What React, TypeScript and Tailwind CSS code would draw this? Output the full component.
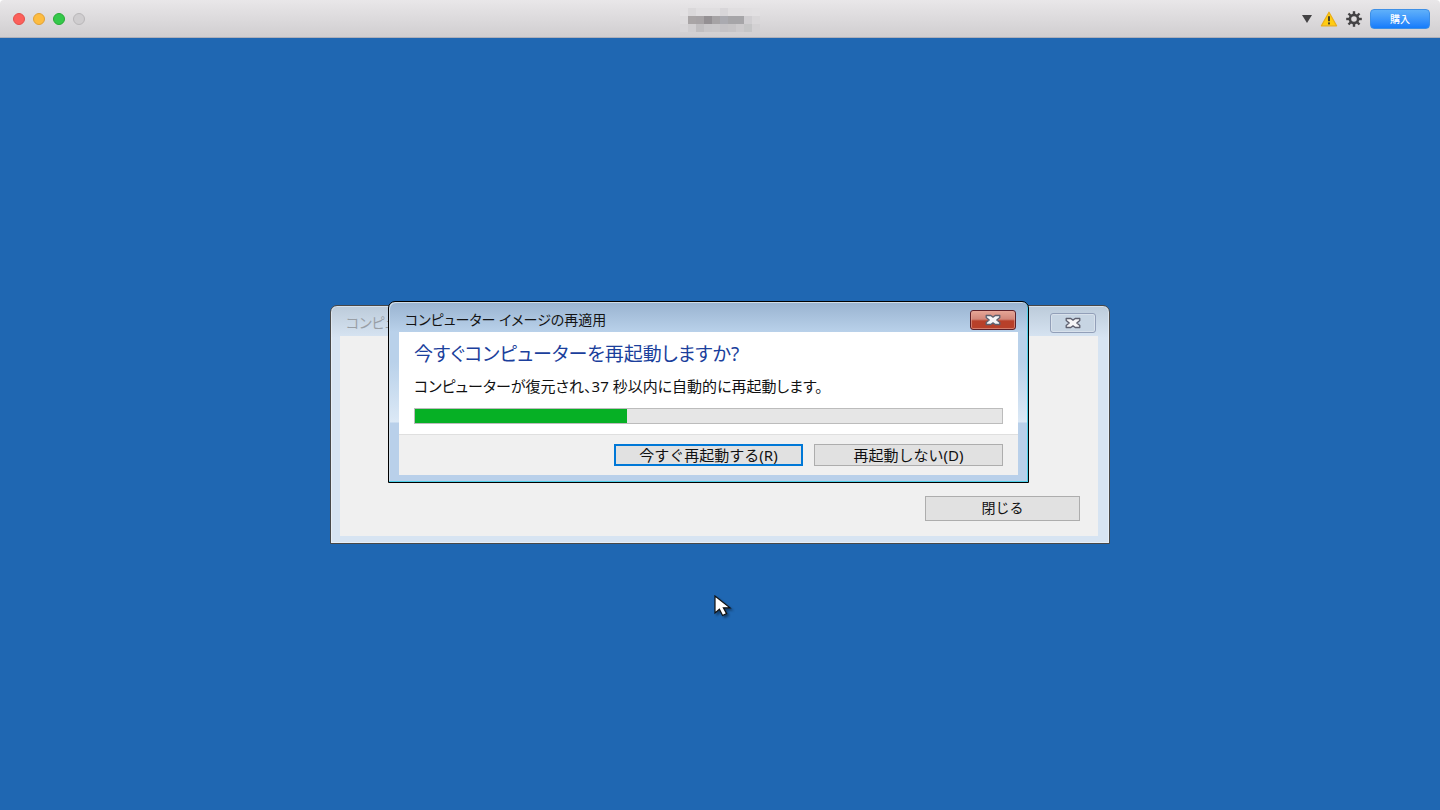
import type { ReactNode } from 'react'

const MOSAIC_ROWS = [
  ['#e3e1e3', '#dad8da', '#e0dee0', '#e0dee0', '#e0dee0', '#d8d6d9', '#e0dee0', '#e0dee0', '#e1dfe1', '#e2e0e2'],
  ['#dddbdd', '#a9a5a6', '#a7a3a5', '#949093', '#a6a3a5', '#aaaab0', '#a6a5a8', '#a6a5a8', '#d0ced1', '#d9d7d9'],
  ['#d8d6d8', '#d0ced0', '#c0bec0', '#c8c6c8', '#c9c7c9', '#c4c2c5', '#c6c4c6', '#cccacc', '#c5c5c6', '#d3d1d3'],
]

const TRAFFIC_LIGHTS = [
  { label: '閉じる', className: 'bg-[#fc605b] border-[#e2504b]' },
  { label: 'しまう', className: 'bg-[#fdbc40] border-[#dfa137]' },
  { label: '拡大', className: 'bg-[#34c84a] border-[#27aa35]' },
  { label: '固定', className: 'bg-[#cfcdcf] border-[#b9b7b9]' },
]

function MosaicTitle() {
  return (
    <div className="grid grid-cols-10 pt-[2px]">
      {MOSAIC_ROWS.flat().map((color, i) => (
        <span key={i} className="size-2" style={{ backgroundColor: color }} />
      ))}
    </div>
  )
}

function WarningIcon() {
  return (
    <svg width="18" height="16" viewBox="0 0 18 16">
      <path d="M9 1.2 16.6 14.8H1.4Z" fill="#ffcc12" stroke="#eaae18" strokeWidth="1.2" strokeLinejoin="round" />
      <path d="M9 5.2v5" stroke="#4a4326" strokeWidth="2" />
      <rect x="8" y="11.4" width="2" height="2" fill="#4a4326" />
    </svg>
  )
}

function GearIcon() {
  return (
    <svg width="16" height="16" viewBox="0 0 16 16" fill="none" stroke="#434244">
      <circle cx="8" cy="8" r="4.1" strokeWidth="2.6" />
      {[0, 45, 90, 135, 180, 225, 270, 315].map((angle) => (
        <path key={angle} d="M8 3.4V0.2" strokeWidth="2.4" transform={`rotate(${angle} 8 8)`} />
      ))}
    </svg>
  )
}

function MacToolbar() {
  return (
    <header className="bg-white">
      <div className="grid h-[38px] grid-cols-[1fr_auto_1fr] items-center rounded-t border-b border-[#aeb0ba] bg-linear-to-b from-[#e9e7e9] to-[#d0ced0]">
        <div className="flex gap-2 pl-[13px]">
          {TRAFFIC_LIGHTS.map((light) => (
            <button key={light.label} aria-label={light.label} className={`size-3 rounded-full border ${light.className}`} />
          ))}
        </div>
        <MosaicTitle />
        <div className="flex items-center justify-end gap-2 pr-[10px]">
          <button aria-label="メニュー">
            <svg width="10" height="8" viewBox="0 0 10 8">
              <path d="M0 0h10L5 8Z" fill="#434244" />
            </svg>
          </button>
          <button aria-label="警告">
            <WarningIcon />
          </button>
          <button aria-label="設定">
            <GearIcon />
          </button>
          <button className="h-5 w-[60px] rounded border border-[#3d8fe6] bg-linear-to-b from-[#5fb0fa] to-[#147cfb] text-[10px] leading-4 font-medium text-white">
            購入
          </button>
        </div>
      </div>
    </header>
  )
}

function CloseGlyph() {
  return (
    <svg width="18" height="12" viewBox="0 0 18 12" fill="#f6f6f8" stroke="#5d5f6e" strokeWidth="1.3" strokeLinejoin="round">
      <path d="M2.2 1.5h4.6L9 3.1l2.2-1.6h4.6v2L12.8 6l3 2.5v2h-4.6L9 8.9l-2.2 1.6H2.2v-2l3-2.5-3-2.5Z" />
    </svg>
  )
}

function TitleCloseButton({ className }: { className: string }) {
  return (
    <button aria-label="閉じる" className={`flex h-5 w-[46px] items-center justify-center rounded-[3px] border ${className}`}>
      <CloseGlyph />
    </button>
  )
}

function DialogButton({ className, children }: { className: string; children: ReactNode }) {
  return (
    <button className={`flex items-center justify-center bg-[#e1e1e1] text-[#111] [font-feature-settings:normal] ${className}`}>
      {children}
    </button>
  )
}

function RestartDialog() {
  return (
    <section
      role="dialog"
      aria-labelledby="restart-title"
      className="absolute -top-1 left-[58px] w-[641px] rounded-t-[7px] border border-black bg-[linear-gradient(to_bottom,#99b3d0_0,#b9d1ea_30px,#b9d1ea_60px,#dce9f6_120px,#b9d0ea_121px)] px-[10px] pb-[7px] shadow-[inset_-1px_-1px_0_#4fcfe8,inset_1px_1px_0_#cfdde9]"
    >
      <div className="flex h-[30px] items-center justify-between pt-[6px] pr-[2px] pl-[6px]">
        <h1 id="restart-title" className="text-[14px] leading-5 text-[#141414]">
          コンピューター イメージの再適用
        </h1>
        <TitleCloseButton className="border-[#5c2029] bg-linear-to-b from-[#e6a697] from-0% via-[#d2877a] via-45% to-[#b8402a] to-55% inset-ring inset-ring-[#e5a598]/60" />
      </div>
      <div className="bg-white px-[15px] pt-[10px] pb-[10px]">
        <p className="text-[19px] leading-6 text-[#1b3f9c]">今すぐコンピューターを再起動しますか?</p>
        <p className="mt-[10px] text-[15px] leading-5 text-[#111]">コンピューターが復元され、37 秒以内に自動的に再起動します。</p>
        <div
          role="progressbar"
          aria-label="再起動までの時間"
          aria-valuenow={36}
          className="mt-3 h-4 border border-[#bcbcbc] bg-[#e6e6e6]"
        >
          <div className="h-full bg-[#06b025]" style={{ width: '36.2%' }} />
        </div>
      </div>
      <div className="flex justify-end gap-[11px] border-t border-[#dfdfdf] bg-[#f0f0f0] px-[15px] py-[9px] text-[15px] leading-5">
        <DialogButton className="h-[22px] w-[189px] border-2 border-[#0078d7]">今すぐ再起動する(R)</DialogButton>
        <DialogButton className="h-[22px] w-[189px] border border-[#adadad]">再起動しない(D)</DialogButton>
      </div>
    </section>
  )
}

function RecoveryWindow() {
  return (
    <section className="relative w-[780px]">
      <div className="rounded-t-[7px] border border-[#484848] bg-[linear-gradient(to_bottom,#bccbda_0,#d7e4f2_32px)] pr-[11px] pb-[7px] pl-[9px] inset-ring inset-ring-white/40">
        <div className="flex h-[30px] items-center justify-between pt-[5px] pr-[2px] pl-[6px]">
          <h2 className="w-[42px] overflow-hidden text-[14px] leading-5 whitespace-nowrap text-[#999fa6]">コンピュ</h2>
          <TitleCloseButton className="border-[#929fb8] bg-[#c7d5e3] inset-ring inset-ring-white/30" />
        </div>
        <div className="flex h-[200px] items-end justify-end bg-[#f0f0f0] pr-[18px] pb-[15px] text-[14px] leading-5">
          <DialogButton className="h-[25px] w-[155px] border border-[#adadad]">閉じる</DialogButton>
        </div>
      </div>
      <RestartDialog />
    </section>
  )
}

function Pointer() {
  return (
    <svg className="absolute top-[557px] left-1/2 -ml-[6px] drop-shadow-[2px_2px_1px_rgba(0,0,0,0.4)]" width="19" height="22" viewBox="0 0 19 22">
      <path d="M1 1v17l4.4-3.8L8.6 20.5l4-1.9-3.2-5.8H16Z" fill="white" stroke="#111" strokeWidth="1.2" />
    </svg>
  )
}

export default function App() {
  return (
    <div className="flex min-h-screen flex-col bg-[#1f67b2] font-['Noto_Sans','Noto_Sans_CJK_JP',sans-serif] [font-feature-settings:'palt']">
      <MacToolbar />
      <main className="relative flex flex-1 items-center justify-center overflow-hidden">
        <RecoveryWindow />
        <Pointer />
      </main>
    </div>
  )
}
